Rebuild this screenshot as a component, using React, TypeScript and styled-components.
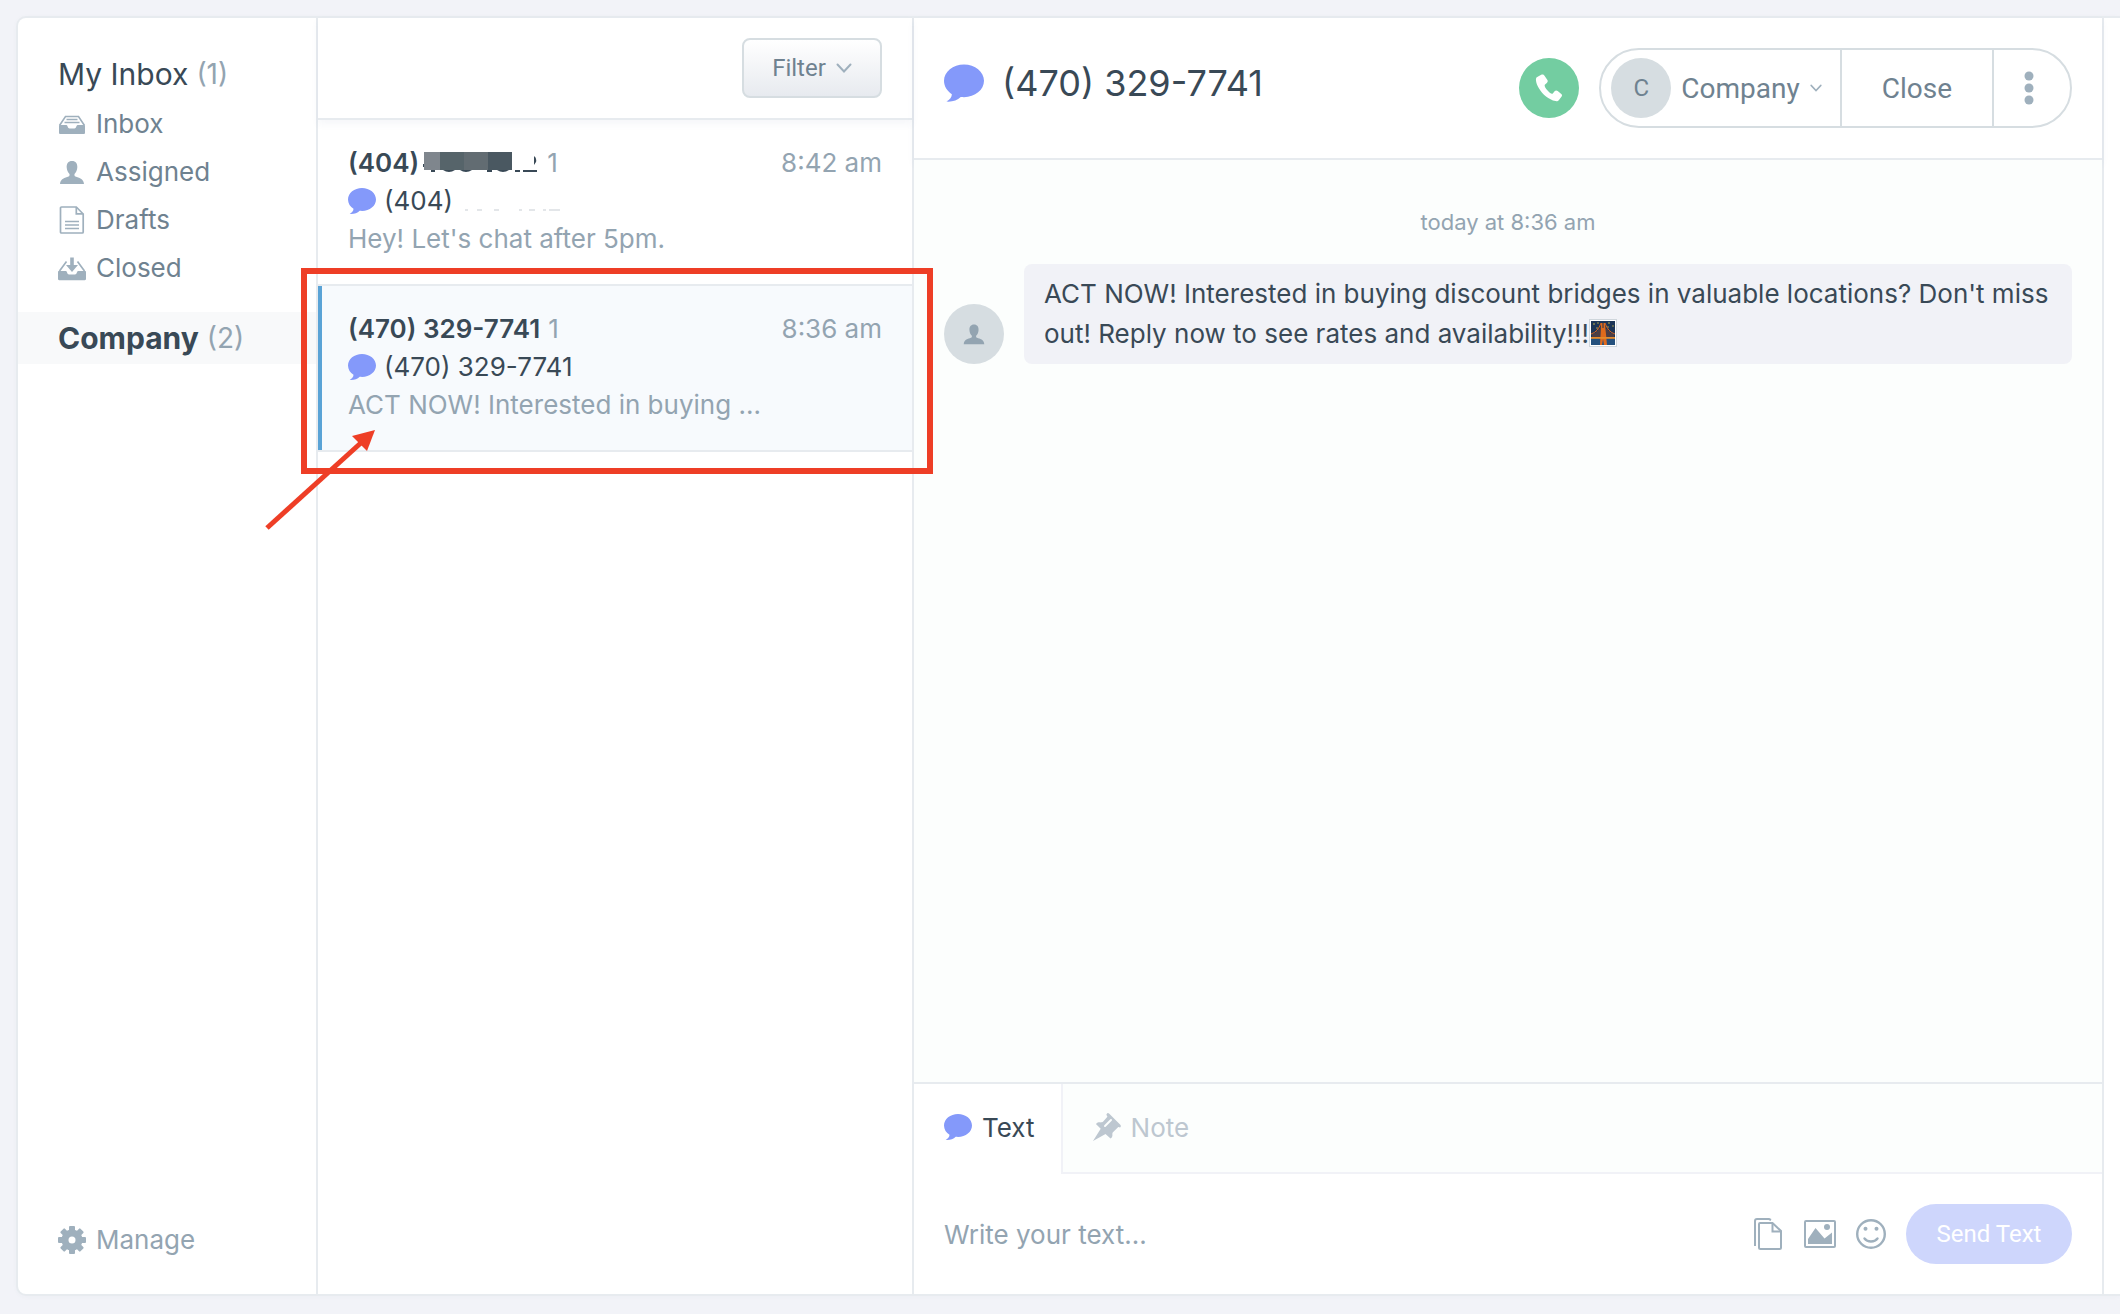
import React from "react";
import styled, { createGlobalStyle, css } from "styled-components";

const color = {
  page: "#f2f3f8",
  line: "#e7ebef",
  softLine: "#f1f2f7",
  border: "#d6dde1",
  ink: "#394956",
  nav: "#6f8290",
  muted: "#93a4b1",
  faint: "#bdc7d0",
  icon: "#9fb0bd",
  violet: "#8499fa",
  mark: "#ee3e26",
};

const GlobalStyle = createGlobalStyle`
  *, *::before, *::after { box-sizing: border-box; }
  body {
    margin: 0;
    background: ${color.page};
    color: ${color.ink};
    font-family: Inter, "Liberation Sans", sans-serif;
    font-size: 26px;
  }
  button, input { font: inherit; color: inherit; }
  button { background: none; border: 0; padding: 0; margin: 0; cursor: pointer; text-align: left; }
  svg { display: block; flex: none; }
`;

const Page = styled.div`
  height: 100vh;
  padding: 18px 0 20px 18px;
`;

const Card = styled.div`
  display: grid;
  grid-template-columns: 300px 596px minmax(0, 1fr) 16px;
  height: 100%;
  background: #fff;
  border-radius: 8px 0 0 8px;
  box-shadow: 0 0 0 2px ${color.line}, 0 1px 6px rgba(60, 80, 110, 0.06);
`;

/* ---------- sidebar ---------- */

const Sidebar = styled.nav`
  display: flex;
  flex-direction: column;
  padding: 32px 0 30px;
  border-right: 2px solid ${color.line};
`;

const BoxLink = styled.a<{ $current?: boolean }>`
  display: flex;
  gap: 8px;
  margin-bottom: 2px;
  padding: 0 40px;
  color: ${color.ink};
  font-size: 30px;
  line-height: 48px;
  text-decoration: none;
  ${(p) =>
    p.$current &&
    css`
      margin-top: 20px;
      background: #f8f9fa;
      font-weight: 700;
      line-height: 52px;
    `}
`;

const BoxCount = styled.span`
  color: ${color.muted};
  font-size: 28px;
  font-weight: 400;
`;

const NavLink = styled.a<{ $muted?: boolean }>`
  display: flex;
  align-items: center;
  gap: 10px;
  padding: 0 40px;
  color: ${(p) => (p.$muted ? color.muted : color.nav)};
  line-height: 48px;
  text-decoration: none;
`;

const SidebarFoot = styled.div`
  margin-top: auto;
`;

/* ---------- conversation list ---------- */

const List = styled.section`
  display: flex;
  flex-direction: column;
  border-right: 2px solid ${color.line};
`;

const ListHeader = styled.header`
  display: flex;
  justify-content: flex-end;
  padding: 20px 30px;
  border-bottom: 2px solid ${color.line};
  box-shadow: 0 4px 8px rgba(60, 80, 130, 0.05);
`;

const FilterButton = styled.button`
  display: flex;
  align-items: center;
  justify-content: center;
  gap: 10px;
  width: 140px;
  height: 60px;
  border: 2px solid ${color.border};
  border-radius: 8px;
  background: linear-gradient(#fff, #e7eaef);
  color: ${color.nav};
  font-family: Roboto, "Liberation Sans", sans-serif;
  font-size: 24px;
`;

const Thread = styled.div<{ $selected?: boolean }>`
  position: relative;
  border-bottom: 2px solid ${color.line};
  background: ${(p) => (p.$selected ? "#f7fafd" : "transparent")};
`;

const ThreadButton = styled.button<{ $selected?: boolean }>`
  display: block;
  width: 100%;
  padding: 24px 30px 26px 26px;
  border-left: 4px solid ${(p) => (p.$selected ? "#5aa3d6" : "transparent")};
  line-height: 38px;
`;

const ThreadLine = styled.span`
  display: flex;
  align-items: center;
`;

const Contact = styled.strong`
  font-weight: 600;
`;

const Unread = styled.span`
  margin-left: 8px;
  color: ${color.muted};
`;

const Time = styled.time`
  margin-left: auto;
  color: ${color.muted};
`;

const Number = styled.span`
  margin-left: 8px;
`;

const Preview = styled.span`
  display: block;
  color: ${color.muted};
`;

const Redaction = styled.svg`
  margin-left: 4px;
`;

const Highlight = styled.div`
  position: absolute;
  z-index: 2;
  inset: -18px -21px -24px -17px;
  border: 6px solid ${color.mark};
  pointer-events: none;
`;

const Pointer = styled.svg`
  position: absolute;
  z-index: 2;
  top: 142px;
  left: -58px;
  pointer-events: none;
`;

/* ---------- conversation ---------- */

const Conversation = styled.main`
  display: flex;
  flex-direction: column;
  min-width: 0;
  border-right: 2px solid ${color.line};
`;

const ConversationHeader = styled.header`
  display: flex;
  align-items: center;
  gap: 20px;
  height: 142px;
  padding: 0 30px;
  border-bottom: 2px solid ${color.line};
  box-shadow: 0 4px 8px rgba(60, 80, 130, 0.05);
`;

const Title = styled.h1`
  display: flex;
  flex: 1;
  align-items: center;
  gap: 18px;
  margin: 0;
  padding-bottom: 10px;
  font-size: 36px;
  font-weight: 400;
  line-height: 44px;
`;

const CallButton = styled.button`
  display: grid;
  place-items: center;
  width: 60px;
  height: 60px;
  border-radius: 50%;
  background: #73cda1;
`;

const Actions = styled.div`
  display: flex;
  height: 80px;
  border: 2px solid ${color.border};
  border-radius: 40px;
  color: ${color.nav};
  font-family: Roboto, "Liberation Sans", sans-serif;
  font-size: 28px;
`;

const Action = styled.button`
  display: flex;
  align-items: center;
  justify-content: center;
  gap: 10px;
  padding: 0 40px;
  & + & { border-left: 2px solid ${color.border}; }
`;

const AssignAction = styled(Action)`
  padding: 0 18px 0 10px;
`;

const MenuAction = styled(Action)`
  padding: 0 36px 0 30px;
`;

const Avatar = styled.span`
  display: grid;
  flex: none;
  place-items: center;
  width: 60px;
  height: 60px;
  border-radius: 50%;
  background: ${color.border};
  color: ${color.nav};
  font-size: 24px;
`;

const Messages = styled.section`
  flex: 1;
  padding: 42px 30px;
  background: #fcfefd;
`;

const DayStamp = styled.p`
  margin: 0 0 22px;
  color: ${color.muted};
  font-size: 22px;
  line-height: 40px;
  text-align: center;
`;

const Message = styled.article`
  display: flex;
  align-items: flex-end;
  gap: 20px;
`;

const Bubble = styled.p`
  flex: 1;
  margin: 0;
  padding: 10px 20px;
  border-radius: 8px;
  background: ${color.softLine};
  line-height: 40px;
`;

const Emoji = styled.svg`
  && { display: inline-block; }
  vertical-align: -4px;
`;

/* ---------- composer ---------- */

const Composer = styled.form`
  border-top: 2px solid ${color.line};
`;

const Tabs = styled.div`
  display: flex;
  height: 90px;
`;

const Tab = styled.button<{ $active?: boolean }>`
  display: flex;
  align-items: center;
  gap: 10px;
  padding: 0 26px 4px 30px;
  ${(p) =>
    !p.$active &&
    css`
      flex: 1;
      padding-bottom: 2px;
      border-left: 2px solid ${color.softLine};
      border-bottom: 2px solid ${color.softLine};
      background: #fcfefd;
      color: ${color.faint};
    `}
`;

const Entry = styled.div`
  display: flex;
  align-items: center;
  gap: 20px;
  height: 120px;
  padding: 0 30px;
`;

const TextBox = styled.input`
  flex: 1;
  min-width: 0;
  padding: 0;
  border: 0;
  outline: 0;
  background: none;
  &::placeholder { color: ${color.muted}; opacity: 1; }
`;

const SendButton = styled.button`
  width: 166px;
  height: 60px;
  border-radius: 30px;
  background: #ced6fc;
  color: #fff;
  font-family: Roboto, "Liberation Sans", sans-serif;
  font-size: 24px;
  text-align: center;
`;

/* ---------- icons ---------- */

const ChatIcon = ({ size = 28 }: { size?: number }) => (
  <svg width={size} height={size} viewBox="0 0 28 28" fill={color.violet} aria-hidden="true">
    <path d="M14 1C6.3 1 0 6 0 12.5c0 4 2.300 7.300 5.500 9.300 0 2-1.300 3.700-3.800 5.200 4.300.3 7.600-.9 10-3.200.8.1 1.500.1 2.300.1 7.700 0 14-5 14-11.400S21.700 1 14 1z" />
  </svg>
);

const TrayIcon = () => (
  <svg width="28" height="28" viewBox="0 0 28 28" fill="none" aria-hidden="true">
    <path d="M1.500 15.500 7.500 6.500h13l6 9" stroke={color.icon} strokeWidth="1.600" />
    <path d="M8.500 9.500h11M6.500 12.500h15" stroke={color.icon} strokeWidth="1.500" />
    <path d="M2 15h6.500c1 0 1.300 3.500 3 3.500h5c1.700 0 2-3.500 3-3.500H26c.7 0 1 .5 1 1v6.500c0 1-.5 1.500-1.500 1.500h-23C1.500 24 1 23.500 1 22.500V16c0-.5.300-1 1-1z" fill={color.icon} />
  </svg>
);

const PersonIcon = ({ size = 28, tint = color.icon }: { size?: number; tint?: string }) => (
  <svg width={size} height={size} viewBox="0 0 28 28" fill={tint} aria-hidden="true">
    <path d="M14 3c-3.700 0-5.600 2.700-5.300 6.500.2 2.800 1.300 5 2.800 6.400.2 1.300 0 2.100-1 2.600C7 20 2.500 20.300 2 26h24c-.5-5.700-5-6-8.500-7.500-1-.5-1.200-1.300-1-2.600 1.500-1.400 2.600-3.600 2.800-6.400C19.600 5.700 17.700 3 14 3z" />
  </svg>
);

const DraftIcon = () => (
  <svg width="28" height="28" viewBox="0 0 28 28" fill="none" stroke={color.icon} strokeWidth="1.700" aria-hidden="true">
    <path d="M3.500 1h14.800L25.200 8v18c0 .7-.4 1-1 1H3.500c-.7 0-1-.4-1-1V2c0-.7.300-1 1-1z" />
    <path d="M18.300 1v6.800h6.900M7 15.500h14M7 19h14M7 22.500h14" />
  </svg>
);

const ClosedIcon = () => (
  <svg width="28" height="28" viewBox="0 0 28 28" fill={color.icon} aria-hidden="true">
    <path d="M8.500 7.500 1.500 17M19.500 7.500l7 9.500" stroke={color.icon} strokeWidth="1.700" />
    <path d="M12.200 3.500h3.600V11H20l-6 7-6-7h4.200z" />
    <path d="M1 17h7c1 0 1.200 3.500 3 3.500h6c1.800 0 2-3.500 3-3.500h7c.6 0 1 .4 1 1v7c0 .7-.5 1.200-1.200 1.200H1.200C.5 26.200 0 25.700 0 25v-7c0-.6.400-1 1-1z" />
  </svg>
);

const GearIcon = () => (
  <svg width="28" height="28" viewBox="0 0 28 28" aria-hidden="true">
    <g fill={color.icon}>
      {[0, 45, 90, 135].map((angle) => (
        <rect key={angle} x="11" y="0" width="6" height="28" rx="1" transform={`rotate(${angle} 14 14)`} />
      ))}
      <circle cx="14" cy="14" r="10.500" />
    </g>
    <circle cx="14" cy="14" r="3.500" fill="#fff" />
  </svg>
);

const Chevron = ({ width = 16 }: { width?: number }) => (
  <svg width={width} height={width} viewBox="0 0 16 16" fill="none" stroke={color.icon} strokeWidth="2" strokeLinecap="round" aria-hidden="true">
    <path d="M1.500 4.500 8 11.500l6.500-7" />
  </svg>
);

const PhoneIcon = () => (
  <svg width="28" height="28" viewBox="0 0 28 28" fill="#fff" aria-hidden="true">
    <path d="M6.200.8 1.800 3.200C.3 4.200.7 8.800 3.900 14.300c3.600 6.200 9.900 11.500 16.600 12.800 1.600.3 2.700-.2 3.500-1.200l2.600-3.300c.7-.9.5-2-.3-2.700L22.700 17c-1-.8-2.300-.7-3.100.2l-1.800 2.200c-1 .9-2.800-.2-5-2.600-2.400-2.700-3.700-5-3-6.100l2-1.700c1-.8 1.200-1.900.6-2.900L9.500 1.800C8.800.6 7.500.1 6.200.8z" />
  </svg>
);

const DotsIcon = () => (
  <svg width="10" height="34" viewBox="0 0 10 34" fill={color.icon} aria-hidden="true">
    <circle cx="5" cy="5" r="4.500" />
    <circle cx="5" cy="17" r="4.500" />
    <circle cx="5" cy="29" r="4.500" />
  </svg>
);

const PinIcon = () => (
  <svg width="28" height="28" viewBox="0 0 28 28" aria-hidden="true">
    <path d="M14.800 0c.6 0 1.100.4 1.500.8l11 11c.9 1 .7 2-.2 2.700l-1.800-.5-5.600 5.400c-.5.700-.3 1.800-.3 3.300-.1 1.200-.9 2.300-1.900 2.800l-5-4.600L0 28l7.700-12.200L2.900 11c1.300-1.500 2.900-1.800 5-1.600.8 0 1.500 0 2.100-.6l4.400-5-1-2C13.600 1 14.100.2 14.800 0z" fill={color.faint} />
    <path d="m18 7-6 6" stroke="#fcfefd" strokeWidth="2" strokeLinecap="round" />
  </svg>
);

const CopyIcon = () => (
  <svg width="32" height="32" viewBox="0 0 32 32" fill="none" stroke={color.icon} strokeWidth="2" aria-hidden="true">
    <path d="M3 28V3c0-1.300.7-2 2-2h12l2 1" />
    <path d="M8 5h12.500L29 13v16.500c0 1-.5 1.500-1.500 1.500H8.500C7.500 31 7 30.500 7 29.500V6c0-.6.400-1 1-1z" />
    <path d="M20.500 5v8.500H29" />
  </svg>
);

const ImageIcon = () => (
  <svg width="32" height="28" viewBox="0 0 32 28" fill={color.icon} aria-hidden="true">
    <rect x="1" y="1" width="30" height="26" rx="1" fill="none" stroke={color.icon} strokeWidth="2" />
    <path d="M4 24v-5l7.500-11 9 10.500 7.500-6V24z" />
    <circle cx="23" cy="7" r="3" />
  </svg>
);

const SmileIcon = () => (
  <svg width="30" height="30" viewBox="0 0 30 30" fill={color.icon} aria-hidden="true">
    <circle cx="15" cy="15" r="13.800" fill="none" stroke={color.icon} strokeWidth="2.400" />
    <circle cx="9.500" cy="9.800" r="2" />
    <circle cx="20.500" cy="9.800" r="2" />
    <path d="M8.500 19.500c3 4 10 4 13 0" fill="none" stroke={color.icon} strokeWidth="2.400" strokeLinecap="round" />
  </svg>
);

const BridgeEmoji = () => (
  <Emoji width="28" height="28" viewBox="0 0 28 28" role="img" aria-label="bridge at night">
    <rect x=".5" y=".5" width="27" height="27" fill="#fff" stroke="#cfd6dc" />
    <rect x="2" y="2" width="24" height="24" fill="#1c3557" />
    <rect x="2" y="19" width="24" height="7" fill="#24507d" />
    <g fill="#d7c34a">
      <circle cx="5" cy="5" r=".8" /><circle cx="9" cy="4" r=".7" /><circle cx="8" cy="9" r=".7" />
      <circle cx="20" cy="4" r=".8" /><circle cx="24" cy="7" r=".7" /><circle cx="19" cy="8" r=".7" />
    </g>
    <path d="M2 15Q9 13 12 4M16 4q3 9 10 11" fill="none" stroke="#d6631f" strokeWidth="1" />
    <path d="M4 15v3M6 14v4M8 12v6M10 10v8M18 10v8M20 12v6M22 14v4M24 15v3" stroke="#a84d22" strokeWidth=".7" />
    <path d="M11 26 12 4h1.500v5h1V4H16l2 22h-3l-1-6-1 6z" fill="#e06a1c" />
    <path d="M2 18h24v1.800H2z" fill="#e58a2b" />
  </Emoji>
);

const NameRedaction = () => (
  <Redaction width="116" height="22" viewBox="0 0 116 22" aria-label="redacted">
    <path d="M0 12h1v3H0zM8 18h4v2H8zM20 18h12q-6 4-12 0zM37 18h12q-6 4-12 0zM64 18h5v2h-5zM74 18h12q-6 4-12 0zM92 18h5v2h-5zM100 18h14v2h-14zM111 4q3 2 2 6l-2 3z" fill={color.ink} />
    <rect x="1" width="16" height="18" fill="#7f868d" />
    <rect x="17" width="24" height="18" fill="#56646a" />
    <rect x="41" width="24" height="18" fill="#626c72" />
    <rect x="65" width="24" height="18" fill="#4a5861" />
  </Redaction>
);

const NumberRedaction = () => (
  <Redaction width="116" height="22" viewBox="0 0 116 22" aria-label="redacted">
    <path d="M8 20h3M20 20h5M37 20h5M62 20h3M72 20h6M86 20h3M92 20h11" stroke="#e3e6e9" strokeWidth="2" />
  </Redaction>
);

const folders = [
  { label: "Inbox", icon: <TrayIcon /> },
  { label: "Assigned", icon: <PersonIcon /> },
  { label: "Drafts", icon: <DraftIcon /> },
  { label: "Closed", icon: <ClosedIcon /> },
];

export default function App() {
  return (
    <Page>
      <GlobalStyle />
      <Card>
        <Sidebar aria-label="Inboxes">
          <BoxLink href="#my-inbox">My Inbox <BoxCount>(1)</BoxCount></BoxLink>
          {folders.map((f) => (
            <NavLink key={f.label} href={`#${f.label.toLowerCase()}`}>
              {f.icon}
              {f.label}
            </NavLink>
          ))}
          <BoxLink href="#company" $current>Company <BoxCount>(2)</BoxCount></BoxLink>
          <SidebarFoot>
            <NavLink href="#manage" $muted>
              <GearIcon />
              Manage
            </NavLink>
          </SidebarFoot>
        </Sidebar>

        <List aria-label="Conversations">
          <ListHeader>
            <FilterButton type="button">Filter <Chevron /></FilterButton>
          </ListHeader>
          <Thread>
            <ThreadButton type="button">
              <ThreadLine>
                <Contact>(404)</Contact>
                <NameRedaction />
                <Unread>1</Unread>
                <Time>8:42 am</Time>
              </ThreadLine>
              <ThreadLine>
                <ChatIcon />
                <Number>(404)</Number>
                <NumberRedaction />
              </ThreadLine>
              <Preview>Hey! Let's chat after 5pm.</Preview>
            </ThreadButton>
          </Thread>
          <Thread $selected>
            <ThreadButton type="button" $selected>
              <ThreadLine>
                <Contact>(470) 329-7741</Contact>
                <Unread>1</Unread>
                <Time>8:36 am</Time>
              </ThreadLine>
              <ThreadLine>
                <ChatIcon />
                <Number>(470) 329-7741</Number>
              </ThreadLine>
              <Preview>ACT NOW! Interested in buying ...</Preview>
            </ThreadButton>
            <Highlight />
            <Pointer width="120" height="106" viewBox="0 0 120 106" aria-hidden="true">
              <path d="M7 100 103 13" stroke={color.mark} strokeWidth="5" />
              <path d="M115 2 92 8l15 15z" fill={color.mark} />
            </Pointer>
          </Thread>
        </List>

        <Conversation>
          <ConversationHeader>
            <Title><ChatIcon size={40} />(470) 329-7741</Title>
            <CallButton type="button" aria-label="Call"><PhoneIcon /></CallButton>
            <Actions>
              <AssignAction type="button">
                <Avatar>C</Avatar>
                Company
                <Chevron width={12} />
              </AssignAction>
              <Action type="button">Close</Action>
              <MenuAction type="button" aria-label="More"><DotsIcon /></MenuAction>
            </Actions>
          </ConversationHeader>

          <Messages>
            <DayStamp>today at 8:36 am</DayStamp>
            <Message>
              <Avatar><PersonIcon size={24} tint={color.muted} /></Avatar>
              <Bubble>
                ACT NOW! Interested in buying discount bridges in valuable locations? Don't miss
                out! Reply now to see rates and availability!!!<BridgeEmoji />
              </Bubble>
            </Message>
          </Messages>

          <Composer onSubmit={(e) => e.preventDefault()}>
            <Tabs>
              <Tab type="button" $active><ChatIcon />Text</Tab>
              <Tab type="button"><PinIcon />Note</Tab>
            </Tabs>
            <Entry>
              <TextBox aria-label="Message" placeholder="Write your text..." />
              <button type="button" aria-label="Templates"><CopyIcon /></button>
              <button type="button" aria-label="Image"><ImageIcon /></button>
              <button type="button" aria-label="Emoji"><SmileIcon /></button>
              <SendButton type="submit">Send Text</SendButton>
            </Entry>
          </Composer>
        </Conversation>
      </Card>
    </Page>
  );
}
